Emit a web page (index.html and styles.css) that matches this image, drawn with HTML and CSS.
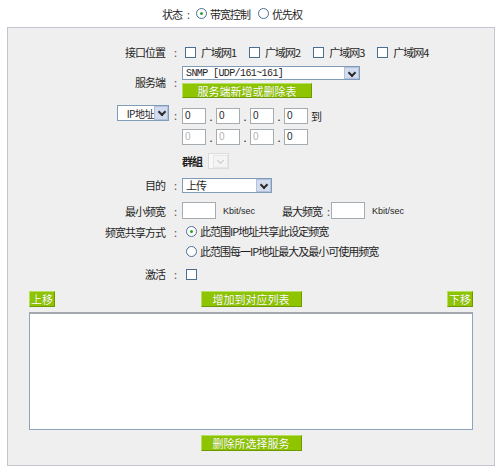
FILE: index.html
```html
<!DOCTYPE html>
<html lang="zh-CN">
<head>
  <meta charset="UTF-8">
  <title>带宽控制</title>
  <link rel="stylesheet" href="styles.css">
</head>
<body>
  <div class="status">
    <span class="status-label">状态<span class="colon">:</span></span>
    <span class="radio on"></span><span class="opt">带宽控制</span>
    <span class="radio"></span><span class="opt">优先权</span>
  </div>

  <div class="panel">
    <div class="row row-iface">
      <div class="label">接口位置<span class="colon">:</span></div>
      <div class="field">
        <span class="check"></span><span class="wan">广域网1</span>
        <span class="check"></span><span class="wan">广域网2</span>
        <span class="check"></span><span class="wan">广域网3</span>
        <span class="check"></span><span class="wan">广域网4</span>
      </div>
    </div>

    <div class="row row-service">
      <div class="label">服务端<span class="colon">:</span></div>
      <div class="field col">
        <div class="select sel-service">
          <span class="sel-text mono">SNMP [UDP/161~161]</span>
          <span class="sel-arrow"></span>
        </div>
        <div class="btn btn-service">服务端新增或删除表</div>
      </div>
    </div>

    <div class="row row-ip">
      <div class="label top">
        <div class="select sel-ip">
          <span class="sel-text ip-type">IP地址</span>
          <span class="sel-arrow"></span>
        </div>
        <span class="ip-colon">:</span>
      </div>
      <div class="field col ip-grid">
        <div class="ip-line">
          <span class="ip">0</span><span class="dot">.</span>
          <span class="ip">0</span><span class="dot">.</span>
          <span class="ip">0</span><span class="dot">.</span>
          <span class="ip">0</span><span class="to">到</span>
        </div>
        <div class="ip-line">
          <span class="ip off">0</span><span class="dot">.</span>
          <span class="ip off">0</span><span class="dot">.</span>
          <span class="ip off">0</span><span class="dot">.</span>
          <span class="ip">0</span>
        </div>
      </div>
    </div>

    <div class="row row-group">
      <div class="label"></div>
      <div class="field">
        <span class="group-label">群組</span>
        <div class="select sel-group"><span class="sel-arrow dim"></span></div>
      </div>
    </div>

    <div class="row row-dest">
      <div class="label">目的<span class="colon">:</span></div>
      <div class="field">
        <div class="select sel-dest">
          <span class="sel-text">上传</span>
          <span class="sel-arrow"></span>
        </div>
      </div>
    </div>

    <div class="row row-bw">
      <div class="label">最小频宽<span class="colon">:</span></div>
      <div class="field">
        <span class="box"></span><span class="unit">Kbit/sec</span>
        <span class="max-label">最大频宽<span class="colon">:</span></span>
        <span class="box"></span><span class="unit">Kbit/sec</span>
      </div>
    </div>

    <div class="row row-share">
      <div class="label">频宽共享方式<span class="colon">:</span></div>
      <div class="field col">
        <div class="share-line"><span class="radio on"></span>此范围IP地址共享此设定频宽</div>
        <div class="share-line"><span class="radio"></span>此范围每一IP地址最大及最小可使用频宽</div>
      </div>
    </div>

    <div class="row row-active">
      <div class="label">激活<span class="colon">:</span></div>
      <div class="field"><span class="check"></span></div>
    </div>

    <div class="btn-row">
      <div class="btn btn-small">上移</div>
      <div class="btn btn-wide">增加到对应列表</div>
      <div class="btn btn-small">下移</div>
    </div>

    <div class="list"></div>

    <div class="btn-row center">
      <div class="btn btn-wide">删除所选择服务</div>
    </div>
  </div>
</body>
</html>
```

FILE: styles.css
```css
* {
  box-sizing: border-box;
}

body {
  margin: 0;
  font-family: "Noto Sans CJK SC", "Liberation Sans", sans-serif;
  font-size: 11px;
  letter-spacing: -1px;
  color: #1e1e1e;
  background: #fff;
}

.colon {
  margin-left: 9px;
  color: #555;
}

/* top status line */
.status {
  height: 27px;
  display: flex;
  align-items: center;
  padding-left: 162px;
}

.status-label {
  margin-right: 7px;
}

.status-label .colon {
  margin-left: 5px;
}

.status .opt {
  margin-left: 3px;
  margin-right: 8px;
}

/* main panel */
.panel {
  margin-left: 7px;
  width: 488px;
  border: 1px solid #c4c4ce;
  background: #efefef;
  padding: 14px 0 14px;
}

.row {
  display: flex;
}

.label {
  width: 174px;
  flex: none;
  padding-right: 6px;
  text-align: right;
  display: flex;
  align-items: center;
  justify-content: flex-end;
}

.label.top {
  align-items: flex-start;
}

.field {
  display: flex;
  align-items: center;
}

.field.col {
  flex-direction: column;
  align-items: flex-start;
}

/* checkbox / radio */
.check {
  width: 11px;
  height: 11px;
  border: 1px solid #4b6f93;
  background: #fff;
  margin: 0 5px 0 3px;
  flex: none;
}

.radio {
  width: 11px;
  height: 11px;
  border: 1px solid #4b6f93;
  border-radius: 50%;
  background: #fff;
  flex: none;
  position: relative;
}

.radio.on::after {
  content: "";
  position: absolute;
  left: 3px;
  top: 3px;
  width: 3px;
  height: 3px;
  border-radius: 50%;
  background: #2aa52a;
}

.row-iface {
  height: 20px;
}

.wan {
  margin-right: 10px;
}

/* selects */
.select {
  display: flex;
  align-items: center;
  background: #fff;
  border: 1px solid #7f9db9;
  height: 15px;
  position: relative;
}

.sel-text {
  flex: 1;
  padding-left: 3px;
  white-space: nowrap;
}

.sel-arrow {
  width: 15px;
  height: 13px;
  flex: none;
  background: #d3dcef;
  border: 1px solid #b3c1dc;
  position: relative;
}

.sel-arrow::after {
  content: "";
  position: absolute;
  left: 4px;
  top: 2px;
  width: 4px;
  height: 4px;
  border-right: 2px solid #2b2b2b;
  border-bottom: 2px solid #2b2b2b;
  transform: rotate(45deg);
}

.sel-arrow.dim {
  background: #f4f4f4;
  border-color: #e6e6e6;
}

.sel-arrow.dim::after {
  border-color: #c8c8c8;
  border-width: 0 1px 1px 0;
}

.mono {
  font-family: "Liberation Mono", monospace;
  font-size: 10px;
  letter-spacing: -0.6px;
}

.ip-type {
  font-size: 10px;
  letter-spacing: -0.5px;
  padding-left: 2px;
}

.row-service {
  margin-top: 4px;
}

.sel-service {
  width: 178px;
  height: 14px;
}

.sel-service .sel-arrow {
  height: 12px;
}

/* green buttons */
.btn {
  background: #8ec400;
  color: #fff;
  border: 1px solid #6e9a00;
  border-top-color: #b8e060;
  border-left-color: #b8e060;
  height: 16px;
  display: flex;
  align-items: center;
  justify-content: center;
  letter-spacing: 0;
  text-shadow: 0 0 1px #6e9a00;
}

.btn-service {
  width: 130px;
  height: 15px;
  margin-top: 3px;
}

/* ip rows */
.row-ip {
  margin-top: 7px;
}

.sel-ip {
  width: 52px;
  height: 16px;
}

.sel-ip .sel-arrow {
  width: 14px;
  height: 14px;
}

.ip-colon {
  margin-left: 5px;
  margin-top: 2px;
  color: #555;
}

.ip-grid {
  padding-top: 3px;
  gap: 5px;
}

.ip-line {
  display: flex;
  align-items: flex-end;
}

.ip {
  width: 24px;
  height: 16px;
  border: 1px solid #a5acb2;
  background: #fff;
  padding-left: 2px;
  line-height: 14px;
  font-family: "Liberation Sans", sans-serif;
  font-size: 10px;
  letter-spacing: 0;
}

.ip.off {
  color: #b5b5b5;
}

.dot {
  width: 10px;
  text-align: center;
  letter-spacing: 0;
}

.to {
  margin-left: 3px;
}

/* group */
.row-group {
  margin-top: 8px;
  height: 16px;
}

.group-label {
  font-weight: bold;
  margin-right: 6px;
}

.sel-group {
  width: 21px;
  height: 16px;
  border-color: #dcdcdc;
  background: #f8f8f8;
  justify-content: flex-end;
}

.row-dest {
  margin-top: 8px;
}

.sel-dest {
  width: 90px;
  height: 15px;
}

/* bandwidth */
.row-bw {
  margin-top: 9px;
  height: 17px;
}

.box {
  width: 34px;
  height: 17px;
  border: 1px solid #a5acb2;
  background: #fff;
}

.unit {
  font-family: "Liberation Sans", sans-serif;
  font-size: 9px;
  letter-spacing: 0;
  margin-left: 7px;
}

.max-label {
  margin-left: 27px;
  margin-right: 2px;
}

.max-label .colon {
  margin-left: 5px;
}

/* share */
.row-share {
  margin-top: 2px;
}

.row-share .label {
  align-items: flex-start;
  padding-top: 3px;
}

.share-line {
  height: 20px;
  display: flex;
  align-items: center;
}

.share-line .radio {
  margin: 0 3px 0 4px;
}

.row-active {
  margin-top: 5px;
  height: 16px;
}

.row-active .check {
  margin-left: 4px;
}

/* bottom controls */
.btn-row {
  display: flex;
  justify-content: space-between;
  padding: 0 21px;
  margin-top: 9px;
}

.btn-row.center {
  justify-content: center;
  margin-top: 5px;
}

.btn-small {
  width: 26px;
}

.btn-wide {
  width: 101px;
}

.list {
  margin: 5px 21px 0;
  height: 118px;
  background: #fff;
  border: 1px solid #8ea4bd;
  border-top: 2px solid #a4a8ae;
}
```
